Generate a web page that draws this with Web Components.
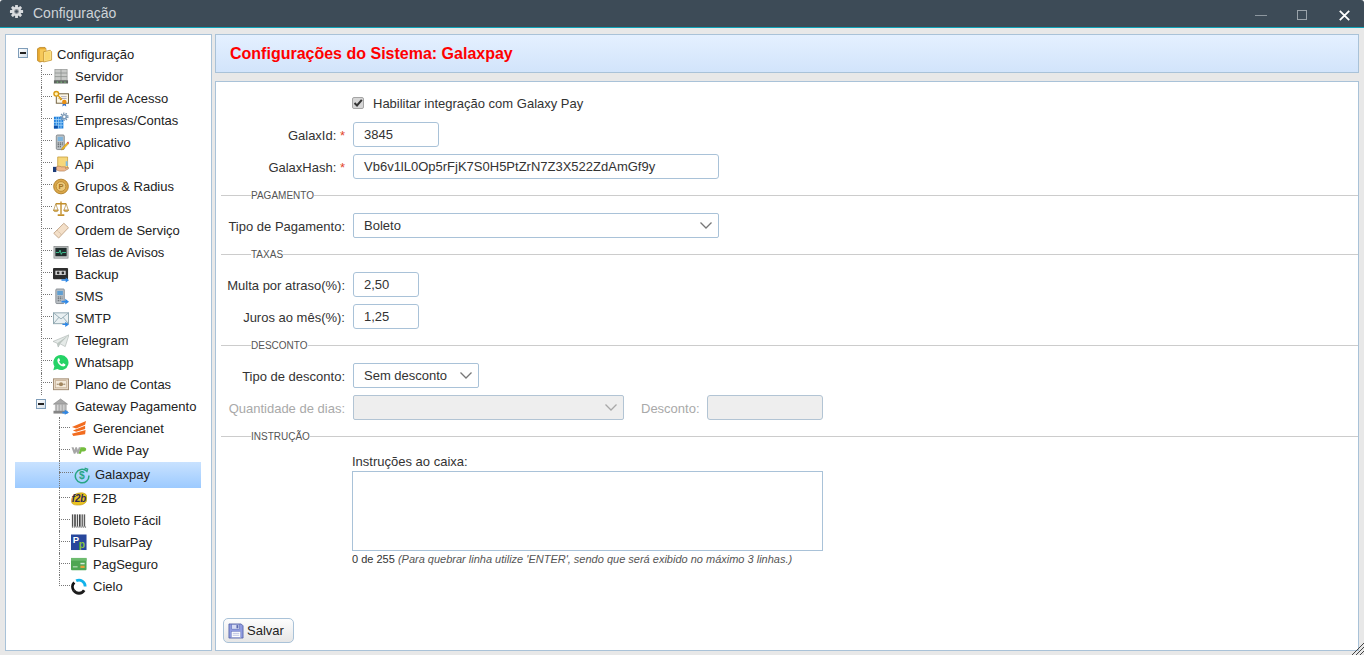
<!DOCTYPE html>
<html lang="pt-BR">
<head>
<meta charset="utf-8">
<title>Configuração</title>
<style>
  html, body { margin: 0; height: 100%; overflow: hidden; background: #fff; }
  body { font: 13px "Liberation Sans", Arial, sans-serif; color: #333; }
</style>
</head>
<body>
<config-window>
  <title-bar slot="title">Configuração</title-bar>

  <tree-panel slot="tree">
    <tree-node icon="folder" label="Configuração" level="0" box>
      <tree-node icon="server" label="Servidor" level="1"></tree-node>
      <tree-node icon="cert" label="Perfil de Acesso" level="1"></tree-node>
      <tree-node icon="company" label="Empresas/Contas" level="1"></tree-node>
      <tree-node icon="app" label="Aplicativo" level="1"></tree-node>
      <tree-node icon="api" label="Api" level="1"></tree-node>
      <tree-node icon="coin" label="Grupos &amp; Radius" level="1"></tree-node>
      <tree-node icon="scale" label="Contratos" level="1"></tree-node>
      <tree-node icon="ticket" label="Ordem de Serviço" level="1"></tree-node>
      <tree-node icon="monitor" label="Telas de Avisos" level="1"></tree-node>
      <tree-node icon="tape" label="Backup" level="1"></tree-node>
      <tree-node icon="sms" label="SMS" level="1"></tree-node>
      <tree-node icon="mail" label="SMTP" level="1"></tree-node>
      <tree-node icon="plane" label="Telegram" level="1"></tree-node>
      <tree-node icon="whatsapp" label="Whatsapp" level="1"></tree-node>
      <tree-node icon="note" label="Plano de Contas" level="1"></tree-node>
      <tree-node icon="bank" label="Gateway Pagamento" level="1" box>
        <tree-node icon="gerencianet" label="Gerencianet" level="2"></tree-node>
        <tree-node icon="widepay" label="Wide Pay" level="2"></tree-node>
        <tree-node icon="galaxpay" label="Galaxpay" level="2" selected></tree-node>
        <tree-node icon="f2b" label="F2B" level="2"></tree-node>
        <tree-node icon="barcode" label="Boleto Fácil" level="2"></tree-node>
        <tree-node icon="pulsar" label="PulsarPay" level="2"></tree-node>
        <tree-node icon="card" label="PagSeguro" level="2"></tree-node>
        <tree-node icon="cielo" label="Cielo" level="2" last></tree-node>
      </tree-node>
    </tree-node>
  </tree-panel>

  <page-header slot="header">Configurações do Sistema: Galaxpay</page-header>

  <form-panel slot="form">
    <form-row>
      <check-field checked>Habilitar integração com Galaxy Pay</check-field>
    </form-row>
    <form-row label="GalaxId:" required>
      <text-field width="86" value="3845"></text-field>
    </form-row>
    <form-row label="GalaxHash:" required>
      <text-field width="366" value="Vb6v1lL0Op5rFjK7S0H5PtZrN7Z3X522ZdAmGf9y"></text-field>
    </form-row>

    <section-line>PAGAMENTO</section-line>
    <form-row label="Tipo de Pagamento:">
      <select-field width="366" value="Boleto"></select-field>
    </form-row>

    <section-line>TAXAS</section-line>
    <form-row label="Multa por atraso(%):">
      <text-field width="66" value="2,50"></text-field>
    </form-row>
    <form-row label="Juros ao mês(%):">
      <text-field width="66" value="1,25"></text-field>
    </form-row>

    <section-line>DESCONTO</section-line>
    <form-row label="Tipo de desconto:">
      <select-field width="126" value="Sem desconto"></select-field>
    </form-row>
    <form-row label="Quantidade de dias:" disabled>
      <select-field width="271" disabled></select-field>
      <field-caption>Desconto:</field-caption>
      <text-field width="116" disabled></text-field>
    </form-row>

    <section-line>INSTRUÇÃO</section-line>
    <note-field label="Instruções ao caixa:" count="0 de 255"
      hint="(Para quebrar linha utilize 'ENTER', sendo que será exibido no máximo 3 linhas.)"></note-field>

    <save-button slot="footer">Salvar</save-button>
  </form-panel>
</config-window>

<script>
const ICONS = {
  gear: `<g fill="#d9dcdf"><circle cx="8" cy="8" r="5"/><rect x="6.5" y="1" width="3" height="14" rx=".6"/><rect x="1" y="6.5" width="14" height="3" rx=".6"/><rect x="6.5" y="1" width="3" height="14" rx=".6" transform="rotate(45 8 8)"/><rect x="6.5" y="1" width="3" height="14" rx=".6" transform="rotate(-45 8 8)"/></g><circle cx="8" cy="8" r="2.6" fill="#8b9197"/><circle cx="8" cy="8" r="1.4" fill="#3d4b57"/>`,
  folder: `<path d="M.5 2.500L3 1h5.500l1 1.500V15L3 16.500.5 15z" fill="#e8a92e" stroke="#b5811f" stroke-width=".8"/><path d="M3 3h6.500v12.500H3z" fill="#f6c95a"/><path d="M7 5.500l7-1.500 1.500 1.500v9L7 16.500z" fill="#fbe28e" stroke="#c4922c" stroke-width=".8"/><path d="M8.500 6.500l5.500-1v8l-5.500 1.500z" fill="#f9d76f"/>`,
  server: `<rect x="2" y="1" width="13" height="11.500" fill="#c8cac8" stroke="#8f9290" stroke-width=".7"/><path d="M2 4.800h13M2 8.600h13M8.500 1v11.500" stroke="#8a8d8b" stroke-width=".8"/><path d="M1 12.500h15v3.500H1z" fill="#5f6561"/><path d="M4 14.500h1.500M8 14.500h1.500M12 14.500h1.500" stroke="#7fd07f"/>`,
  cert: `<rect x="3.500" y="3.500" width="13" height="10" fill="#fbf6e6" stroke="#6d5c3a"/><path d="M8.500 6.500h6M8.500 8.500h6" stroke="#9a9ab8" stroke-width=".8"/><circle cx="3.500" cy="3.500" r="2.500" fill="#fff3b8" stroke="#d99a12" stroke-width="1.500"/><path d="M5.200 5.200l4.300 4.300M7.300 7.300l-1.300 1.300M8.800 8.800l-1.300 1.300" stroke="#d99a12" stroke-width="1.400"/><path d="M10.500 13.500l-.6 3.500 2.100-1.200 2.100 1.200-.6-3.500z" fill="#2f6fd0"/><circle cx="12" cy="12.300" r="2.400" fill="#e88f14"/>`,
  company: `<rect x="1" y="4.500" width="10" height="12.500" fill="#1f7fdc"/><path d="M3.500 5v12M6 5v12M8.500 5v12M1 7.500h10M1 10.500h10M1 13.500h10" stroke="#9fd2f8" stroke-width=".9"/><rect x="1" y="14" width="4" height="3" fill="#0d4fa8"/><circle cx="12" cy="4.500" r="3" fill="#7f9cb8"/><circle cx="12" cy="4.500" r="3.800" fill="none" stroke="#6f8eac" stroke-width="1.400" stroke-dasharray="1.400 1.300"/><circle cx="12" cy="4.500" r="1.300" fill="#fff"/>`,
  app: `<rect x="3.500" y=".5" width="8.500" height="15.500" rx="1.300" fill="#bcc2c6" stroke="#6f757a" stroke-width=".8"/><rect x="5" y="2.500" width="5.500" height="4.500" fill="#7fb5dc"/><path d="M5 9h1.300M7.200 9h1.300M9.300 9h1.300M5 11h1.300M7.200 11h1.300M9.300 11h1M5 13h1.300M7.200 13h1.300" stroke="#4f5559" stroke-width="1.100"/><path d="M9.500 14.500l5.500-6 1.500 1.400-5.500 5.800-2.200.8z" fill="#f0b51f" stroke="#a87a18" stroke-width=".4"/><path d="M15 8.500l1-1 1 1.500-.6 1z" fill="#d9312b"/>`,
  api: `<path d="M5 .5h10.500v12.500H5z" fill="#f6d77a" stroke="#c39a3a" stroke-width=".8"/><path d="M13.500 5h2v5h-2z" fill="#7fbde8"/><path d="M3 11.500c2-1.500 4-1.500 6-.5l4 0c1 0 1 1.400 0 1.500l3-.8c1-.2 1 1 .3 1.400l-4.300 2.400H7l-4-1.500z" fill="#f0b98c" stroke="#a8734a" stroke-width=".6"/><rect x="0" y="11" width="3.500" height="5.500" fill="#1d3c78"/>`,
  coin: `<circle cx="8.500" cy="8.500" r="7.800" fill="#dca84a" stroke="#b07f28"/><circle cx="8.500" cy="8.500" r="5.200" fill="#ecc878" stroke="#b98a34"/><text x="8.500" y="11.500" font-size="8" font-weight="700" text-anchor="middle" fill="#a5741f" font-family="Liberation Sans">P</text>`,
  scale: `<path d="M8.500 1v14M3 3.500h11" stroke="#c4902c" stroke-width="1.500"/><path d="M5 14.500h7v2H5z" fill="#c4902c"/><path d="M3 3.500L.8 10M3 3.500l2.200 6.500M14 3.500L11.800 10M14 3.500l2.200 6.500" stroke="#a87f2a" stroke-width=".7"/><path d="M.3 10h5.400c0 2.400-5.400 2.400-5.400 0zM11.300 10h5.400c0 2.400-5.400 2.400-5.400 0z" fill="#e0b254" stroke="#a07522" stroke-width=".6"/>`,
  ticket: `<path d="M.8 11.500L11.500.8l5 4.700L6 16.500z" fill="#f3dfc8" stroke="#c4a88b"/><path d="M4.500 8.500l4.500 4.500" stroke="#a98b70" stroke-width=".8" stroke-dasharray="1 1"/>`,
  monitor: `<rect x="1" y="2" width="15" height="12.500" fill="#c9cccc" stroke="#848889" stroke-width=".8"/><rect x="2.500" y="3.500" width="12" height="9" fill="#202c2b"/><path d="M3 8.500h3.500l1-2.500 1.300 4.500 1-2h4" fill="none" stroke="#42d6a0" stroke-width=".9"/>`,
  tape: `<rect x="0" y="1.500" width="16" height="12" rx="1" fill="#2e2e2e"/><rect x="2.500" y="4.500" width="11" height="4.500" fill="#d2d2d2"/><circle cx="5.500" cy="6.800" r="1.400" fill="#2e2e2e"/><circle cx="10.500" cy="6.800" r="1.400" fill="#2e2e2e"/><path d="M9 13.500h4.500v-2l3.500 3-3.500 2.500v-1.800H9z" fill="#2f88e6"/>`,
  sms: `<rect x="3" y=".5" width="9" height="15.500" rx="1" fill="#bcc2c7" stroke="#737a80" stroke-width=".8"/><rect x="4.500" y="2.500" width="6" height="4.500" fill="#5f9fd2"/><path d="M5 9h5M5 11h5M5 13h3" stroke="#555c61" stroke-width="1.100" stroke-dasharray="1.300 .8"/><path d="M9 13h4v-2l4 3-4 3v-2H9z" fill="#2f88e6"/>`,
  mail: `<rect x=".5" y="2.500" width="16" height="11.500" fill="#e9f0f2" stroke="#8ea6af"/><path d="M.5 2.500l8 6.500 8-6.500M.5 14l6-7M16.500 14l-6-7" fill="none" stroke="#8ea6af" stroke-width=".9"/><path d="M10 14h3v-2l4 2.800-4 2.700v-2h-3z" fill="#2f88e6"/>`,
  plane: `<path d="M0 9.500L17 2.500 13 15 7.500 12l-2 3.500L4.500 11.500z" fill="#e5eae8" stroke="#a4ada9" stroke-width=".6"/><path d="M4.500 11.500L17 2.500 7.500 12l-2 3.500z" fill="#bcc6c1"/>`,
  whatsapp: `<path d="M8.500 .5a8 8 0 1 1-3.900 15L.3 16.700l1.200-4.100A8 8 0 0 1 8.500 .5z" fill="#25d366"/><path d="M6 4c-.9.300-1.500 1.500-1.300 2.800.4 2.900 3.200 5.300 5.800 5.800 1.300.2 2.500-.4 2.700-1.500.1-.4-.1-.6-.4-.8l-1.600-.9c-.4-.2-.7 0-.9.200l-.6.900c-1.400-.5-2.700-1.700-3.200-3.100l.8-.8c.2-.2.300-.4.100-.8l-.7-1.500c-.1-.3-.3-.4-.7-.3z" fill="#fff"/>`,
  note: `<rect x=".5" y="2.500" width="16" height="11.500" fill="#e7d9c6" stroke="#a08a70"/><rect x="2.500" y="4.500" width="12" height="7.500" fill="#f4eadb" stroke="#b8a082" stroke-width=".6"/><circle cx="8.500" cy="8.200" r="2.200" fill="#a1865f"/><path d="M4 8.200h2M11 8.200h2" stroke="#8a7354"/>`,
  bank: `<path d="M8 .5L.5 6h15z" fill="#a8a8a8" stroke="#777" stroke-width=".6"/><path d="M2.500 6.500h2v6.500h-2zM5.800 6.500h2v6.500h-2zM9 6.500h2v6.500H9zM12.200 6.500h2v6.500h-2z" fill="#b4b4b4" stroke="#8a8a8a" stroke-width=".3"/><path d="M.5 13h15v3H.5z" fill="#858585"/><path d="M10 14h2.500v-2l4.500 3-4.500 2.200V16H10z" fill="#2f88e6"/>`,
  gerencianet: `<path d="M16 .5L1 7l4.500 1.500L15 4.500zM15 5.500L2 10.500l3.500 1.500L15 9zM15.500 10L1 14l1.500 2.500L15 14.500z" fill="#f26c1f"/>`,
  widepay: `<path d="M.5 5h2.300l.9 3 1-3h1.600l1 3 1-3H10.500L8 12H6.500L5.600 9.500 4.600 12H3z" fill="#a6a6a6"/><path d="M8 12l2.300-7h3.200c3.600 0 3.500 4.500 0 4.500h-2.200L10.500 12z" fill="#74bd3e"/>`,
  galaxpay: `<path d="M13.500 3.800A7.200 7.200 0 1 0 15.800 8.500" fill="none" stroke="#27a585" stroke-width="1.600"/><path d="M11.300 .8l3.200 1-1 3.300" fill="none" stroke="#27a585" stroke-width="1.400"/><text x="8.500" y="12.500" font-size="11" font-weight="700" text-anchor="middle" fill="#27a585" font-family="Liberation Sans">$</text>`,
  f2b: `<path d="M.5 11C.5 6 5 2.500 10.500 2.500S17 5 17 8.500c0 5-4.500 7-9 7-4.500 0-7.500-.5-7.500-4.500z" fill="#e9c21f" stroke="#b8930f" stroke-width=".6"/><text x="8.500" y="12.500" font-size="11" font-weight="700" font-style="italic" text-anchor="middle" fill="#2d2a55" font-family="Liberation Sans" textLength="15.500" lengthAdjust="spacingAndGlyphs">f2b</text>`,
  barcode: `<path d="M1.500 2v13M3.500 2v13M5 2v13M7 2v13M9 2v13M10.500 2v13M12.500 2v13M14.500 2v13" stroke="#333"/><path d="M1 15.500h15" stroke="#333" stroke-dasharray="1 1"/>`,
  pulsar: `<rect width="16.500" height="16.500" fill="#27479c"/><text x="5.200" y="9.300" font-size="10" font-weight="700" text-anchor="middle" fill="#fff" font-family="Liberation Sans">P</text><text x="11.500" y="14" font-size="11" font-weight="700" text-anchor="middle" fill="#86c440" font-family="Liberation Sans">p</text>`,
  card: `<rect y="1.500" width="16.500" height="13" rx="1" fill="#4fa653"/><rect y="1.500" width="16.500" height="3" fill="#6dbb6f"/><path d="M2 11h5" stroke="#d4ecd4"/><path d="M10 7.500h4.500" stroke="#d7ecd7" stroke-width="1.600"/><rect x="10" y="9.800" width="4.500" height="2.400" fill="#e6a23c"/>`,
  cielo: `<path d="M3 12.800A6.500 6.500 0 0 1 3.500 4.200" fill="none" stroke="#111" stroke-width="3"/><path d="M3 12.800A6.500 6.500 0 0 0 14 12.500" fill="none" stroke="#1c1c1c" stroke-width="3"/><path d="M5.500 2.500A6.500 6.500 0 0 1 15 8.500" fill="none" stroke="#12b2ea" stroke-width="3"/>`,
  save: `<path d="M1 1h13l2 2v13H1z" fill="#8f9be0" stroke="#4b5aa0" stroke-width=".8"/><rect x="4" y="1.500" width="8" height="5" fill="#d6dbf3" stroke="#5a68ae" stroke-width=".5"/><rect x="9" y="2.200" width="2" height="3.400" fill="#5a68ae"/><rect x="3.500" y="9" width="10" height="6.500" fill="#fff" stroke="#6a78bc" stroke-width=".5"/><path d="M5 11h7M5 13h7" stroke="#9aa4d4" stroke-width=".7"/>`
};

function iconSvg(name, size) {
  return `<svg width="${size}" height="${size}" viewBox="0 0 17 17" aria-hidden="true">${ICONS[name] || ""}</svg>`;
}

const chevron = (color) =>
  `<svg width="12" height="7" viewBox="0 0 12 7"><path d="M.5 .5L6 6l5.500-5.500" fill="none" stroke="${color}" stroke-width="1.300"/></svg>`;

class ConfigWindow extends HTMLElement {
  constructor() {
    super();
    this.attachShadow({ mode: "open" });
    this.shadowRoot.innerHTML = `
  <style>
    :host {
      display: flex;
      flex-direction: column;
      height: 655px;
      background: #e8e8e8;
      position: relative;
      border-radius: 3px 3px 0 0;
      overflow: hidden;
    }
    main {
      flex: 1;
      min-height: 0;
      display: flex;
      gap: 3px;
      padding: 6px 5px 4px 5px;
    }
    .right {
      flex: 1;
      min-width: 0;
      display: flex;
      flex-direction: column;
      gap: 8px;
    }
    ::slotted([slot="form"]) {
      flex: 1;
      min-height: 0;
    }
    .grip {
      position: absolute;
      right: 0;
      bottom: 0;
    }
  </style>
  <slot name="title"></slot>
  <main>
    <slot name="tree"></slot>
    <div class="right">
      <slot name="header"></slot>
      <slot name="form"></slot>
    </div>
  </main>
  <svg class="grip" width="13" height="13" viewBox="0 0 13 13">
    <path d="M1 13L13 1M5 13l8-8M9 13l4-4" stroke="#444" stroke-width="1"/>
  </svg>
`;
  }
}

class TitleBar extends HTMLElement {
  constructor() {
    super();
    this.attachShadow({ mode: "open" });
    this.shadowRoot.innerHTML = `
  <style>
    :host {
      display: flex;
      align-items: center;
      height: 27px;
      flex: none;
      background: #3d4b57;
      border-bottom: 1px solid #0fa3b8;
      color: #ced3d7;
      font-size: 14px;
      padding: 0 0 0 9px;
    }
    .gear { display: flex; margin: -3px 8px 0 0; }
    .title { flex: 1; margin-top: -2px; }
    .btns { display: flex; padding-top: 3px; margin-right: -1px; }
    .btn { width: 41.5px; display: flex; justify-content: center; }
  </style>
  <span class="gear">${iconSvg("gear", 16)}</span>
  <span class="title"><slot></slot></span>
  <div class="btns">
    <span class="btn"><svg width="12" height="11" viewBox="0 0 12 11"><path d="M0 5.500h12" stroke="#8d979f"/></svg></span>
    <span class="btn"><svg width="11" height="11" viewBox="0 0 11 11"><rect x=".5" y=".5" width="9" height="9" fill="none" stroke="#9aa3aa"/></svg></span>
    <span class="btn"><svg width="11" height="11" viewBox="0 0 11 11"><path d="M.8 .8l9.400 9.400M10.200 .8L.8 10.200" stroke="#fff" stroke-width="1.800"/></svg></span>
  </div>
`;
  }
}

class TreePanel extends HTMLElement {
  constructor() {
    super();
    this.attachShadow({ mode: "open" });
    this.shadowRoot.innerHTML = `
  <style>
    :host {
      display: block;
      width: 205px;
      flex: none;
      box-sizing: content-box;
      background: #fff;
      border: 1px solid #a9c2d8;
      height: calc(100% - 2px);
      padding: 0;
      overflow: hidden;
      color: #222;
    }
    .inner { padding: 8px 10px 0 9px; }
  </style>
  <div class="inner"><slot></slot></div>
`;
  }
}

class TreeNode extends HTMLElement {
  constructor() {
    super();
    this.attachShadow({ mode: "open" });
  }

  connectedCallback() {
    const level = parseInt(this.getAttribute("level")) || 0;
    const hasBox = this.hasAttribute("box");
    const selected = this.hasAttribute("selected");
    const last = this.hasAttribute("last");
    // each level moves 18px right, rows stay full width for the selection bar
    const left = level === 0 ? 22 : level === 1 ? 38 : 56;
    const guide = level === 0 ? 0 : level === 1 ? 26 : 44;
    const gap = level === 0 ? 4 : selected ? 5 : 6;
    this.shadowRoot.innerHTML = `
  <style>
    :host { display: block; }
    .row {
      position: relative;
      display: flex;
      align-items: center;
      height: 22px;
      padding-left: ${selected ? left + 3 : left}px;
      white-space: nowrap;
    }
    .row.sel {
      height: 26px;
      margin: 1px 0 -1px 0;
      background: linear-gradient(#c9e2ff, #9ccaff);
    }
    .row.sel .text { margin-top: -2px; }
    .icon { display: flex; width: 16px; height: 17px; margin-right: ${gap}px; }
    .icon svg { display: block; }
    .v, .h { position: absolute; }
    .v {
      left: ${guide}px;
      top: ${selected ? -1 : 0}px;
      bottom: ${last ? "50%" : "0"};
      border-left: 1px dotted #777;
    }
    .h {
      left: ${guide}px;
      top: ${selected ? 10 : level === 2 ? 10 : 9}px;
      width: ${selected ? 14 : 11}px;
      border-top: 1px dotted #777;
    }
    .box {
      position: absolute;
      left: ${level === 0 ? 3 : 21}px;
      top: ${level === 0 ? 5 : 4}px;
      width: 8px;
      height: 8px;
      border: 1px solid #7f9db9;
      background: linear-gradient(135deg, #fff, #d4dfe9);
    }
    .box::after {
      content: "";
      position: absolute;
      left: 1px;
      right: 1px;
      top: 3px;
      height: 2px;
      background: #222;
    }
  </style>
  <div class="row ${selected ? "sel" : ""}">
    ${level > 0 && !hasBox ? `<i class="v"></i><i class="h"></i>` : ""}
    ${hasBox ? `<i class="box"></i>` : ""}
    <span class="icon">${iconSvg(this.getAttribute("icon"), 17)}</span>
    <span class="text">${this.getAttribute("label").replace("&", "&amp;")}</span>
  </div>
  <slot></slot>
`;
  }
}

class PageHeader extends HTMLElement {
  constructor() {
    super();
    this.attachShadow({ mode: "open" });
    this.shadowRoot.innerHTML = `
  <style>
    :host {
      display: flex;
      align-items: center;
      flex: none;
      height: 37px;
      padding-left: 14px;
      background: linear-gradient(#e4f0ff, #d2e4fb);
      border: 1px solid #a9c2d8;
      color: #f00;
      font-size: 16px;
      font-weight: bold;
    }
  </style>
  <slot></slot>
`;
  }
}

class FormPanel extends HTMLElement {
  constructor() {
    super();
    this.attachShadow({ mode: "open" });
    this.shadowRoot.innerHTML = `
  <style>
    :host {
      display: flex;
      flex-direction: column;
      background: #fff;
      border: 1px solid #a9c2d8;
      padding: 8px 0 7px 0;
      box-sizing: border-box;
    }
    .body { flex: 1; }
    .foot { padding-left: 7px; }
  </style>
  <div class="body"><slot></slot></div>
  <div class="foot"><slot name="footer"></slot></div>
`;
  }
}

class FormRow extends HTMLElement {
  constructor() {
    super();
    this.attachShadow({ mode: "open" });
  }

  connectedCallback() {
    const label = this.getAttribute("label") || "";
    const star = this.hasAttribute("required") ? ` <b>*</b>` : "";
    this.shadowRoot.innerHTML = `
  <style>
    :host {
      display: flex;
      align-items: center;
      height: 25px;
      margin-bottom: 7px;
      color: ${this.hasAttribute("disabled") ? "#a9a9a9" : "#333"};
    }
    label {
      width: 129px;
      margin-right: 8px;
      padding-top: 2px;
      text-align: right;
      white-space: nowrap;
      flex: none;
    }
    b { color: #e2462a; font-weight: normal; }
    .fields { display: flex; align-items: center; }
  </style>
  <label>${label}${star}</label>
  <div class="fields"><slot></slot></div>
`;
  }
}

class FieldCaption extends HTMLElement {
  constructor() {
    super();
    this.attachShadow({ mode: "open" });
    this.shadowRoot.innerHTML = `
  <style>
    :host { display: block; margin: 2px 7px 0 17px; white-space: nowrap; }
  </style>
  <slot></slot>
`;
  }
}

class CheckField extends HTMLElement {
  constructor() {
    super();
    this.attachShadow({ mode: "open" });
    this.shadowRoot.innerHTML = `
  <style>
    :host { display: flex; align-items: center; margin-left: -1px; white-space: nowrap; }
    .box {
      position: relative;
      width: 10px;
      height: 10px;
      margin-right: 9px;
      background: #d6d6d6;
      border: 1px solid #a5a5a5;
      border-radius: 2px;
      display: block;
    }
    svg { position: absolute; left: 0; top: 0; }
    .text { padding-top: 2px; }
  </style>
  <span class="box">
    <svg width="10" height="10" viewBox="0 0 10 10"><path d="M1.500 5l2.500 2.500L8.800 1.800" fill="none" stroke="#333" stroke-width="2"/></svg>
  </span>
  <span class="text"><slot></slot></span>
`;
  }
}

class TextField extends HTMLElement {
  constructor() {
    super();
    this.attachShadow({ mode: "open" });
  }

  connectedCallback() {
    const disabled = this.hasAttribute("disabled");
    this.shadowRoot.innerHTML = `
  <style>
    :host {
      display: flex;
      align-items: center;
      box-sizing: border-box;
      width: ${this.getAttribute("width")}px;
      height: 25px;
      padding: 0 10px;
      border: 1px solid ${disabled ? "#b2c4d4" : "#a9c2d8"};
      border-radius: 3px;
      background: ${disabled ? "#eeeeee" : "#fff"};
      color: #333;
      white-space: nowrap;
    }
  </style>
  <span>${this.getAttribute("value") || ""}</span>
`;
  }
}

class SelectField extends HTMLElement {
  constructor() {
    super();
    this.attachShadow({ mode: "open" });
  }

  connectedCallback() {
    const disabled = this.hasAttribute("disabled");
    this.shadowRoot.innerHTML = `
  <style>
    :host {
      display: flex;
      align-items: center;
      justify-content: space-between;
      box-sizing: border-box;
      width: ${this.getAttribute("width")}px;
      height: 25px;
      padding: 0 6px 0 10px;
      border: 1px solid ${disabled ? "#b2c4d4" : "#a9c2d8"};
      border-radius: 2px;
      background: ${disabled ? "#eeeeee" : "#fff"};
      color: #333;
      white-space: nowrap;
    }
    svg { display: block; }
  </style>
  <span>${this.getAttribute("value") || ""}</span>
  ${chevron(disabled ? "#a8a8a8" : "#777")}
`;
  }
}

class SectionLine extends HTMLElement {
  constructor() {
    super();
    this.attachShadow({ mode: "open" });
    this.shadowRoot.innerHTML = `
  <style>
    :host {
      display: flex;
      align-items: center;
      height: 34px;
      margin: -7px 0 0 5px;
      padding-bottom: 2px;
      box-sizing: border-box;
      font-size: 10px;
      color: #555;
    }
    i { height: 1px; background: #ccc; display: block; }
    .lead { width: 30px; flex: none; }
    .rest { flex: 1; }
  </style>
  <i class="lead"></i><slot></slot><i class="rest"></i>
`;
  }
}

class NoteField extends HTMLElement {
  constructor() {
    super();
    this.attachShadow({ mode: "open" });
  }

  connectedCallback() {
    this.shadowRoot.innerHTML = `
  <style>
    :host { display: block; margin-left: 136px; }
    .label { line-height: 15px; height: 17px; }
    .area {
      box-sizing: border-box;
      width: 471px;
      height: 80px;
      border: 1px solid #a9c2d8;
      background: #fff;
    }
    .count { font-size: 11px; line-height: 16px; margin-top: 0; color: #333; }
    em { color: #555; }
  </style>
  <div class="label">${this.getAttribute("label")}</div>
  <div class="area"></div>
  <div class="count">${this.getAttribute("count")} <em>${this.getAttribute("hint")}</em></div>
`;
  }
}

class SaveButton extends HTMLElement {
  constructor() {
    super();
    this.attachShadow({ mode: "open" });
    this.shadowRoot.innerHTML = `
  <style>
    :host {
      display: inline-flex;
      align-items: center;
      box-sizing: border-box;
      height: 25px;
      width: 71px;
      padding-left: 4px;
      border: 1px solid #a9c2d8;
      border-radius: 5px;
      background: linear-gradient(#fdfdfd, #e6e6e6);
      color: #222;
      gap: 3px;
    }
    svg { display: block; }
  </style>
  ${iconSvg("save", 16)}
  <slot></slot>
`;
  }
}

customElements.define("config-window", ConfigWindow);
customElements.define("title-bar", TitleBar);
customElements.define("tree-panel", TreePanel);
customElements.define("tree-node", TreeNode);
customElements.define("page-header", PageHeader);
customElements.define("form-panel", FormPanel);
customElements.define("form-row", FormRow);
customElements.define("field-caption", FieldCaption);
customElements.define("check-field", CheckField);
customElements.define("text-field", TextField);
customElements.define("select-field", SelectField);
customElements.define("section-line", SectionLine);
customElements.define("note-field", NoteField);
customElements.define("save-button", SaveButton);
</script>
</body>
</html>
